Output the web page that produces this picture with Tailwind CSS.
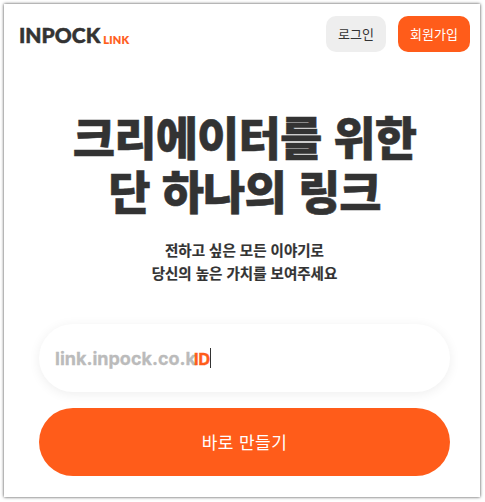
<!DOCTYPE html>
<html lang="ko">
<head>
    <meta charset="UTF-8">
    <meta name="viewport" content="width=device-width, initial-scale=1.0">
    <title>INPOCK LINK</title>
    <script src="https://cdn.jsdelivr.net/npm/@tailwindcss/browser@4"></script>
</head>
<body class="bg-white h-screen overflow-hidden font-['Noto_Sans_CJK_KR','Noto_Sans',sans-serif] text-[#333]">
    <div class="ml-1 mt-1 w-[476px] h-[493px] bg-white shadow-[0_0_3px_rgba(0,0,0,0.75)]">
        <header class="flex justify-between items-center pl-[15px] pr-[10px] pt-3">
            <a class="flex items-end gap-[3px] leading-none pt-[1px]">
                <span class="font-['Lato',sans-serif] font-black text-[21px] [-webkit-text-stroke:0.5px_#333] text-[#333]">INPOCK</span>
                <span class="font-['Lato',sans-serif] font-black text-[11px] [-webkit-text-stroke:0.2px_#ff5c1a] text-[#ff5c1a] tracking-[0.2px]">LINK</span>
            </a>
            <div class="flex gap-3">
                <button class="w-[60px] h-9 rounded-[10px] bg-[#eeeeee] text-[13px] text-[#333]">로그인</button>
                <button class="w-[72px] h-9 rounded-[10px] bg-[#ff5c1a] text-[13px] text-white">회원가입</button>
            </div>
        </header>

        <section class="flex flex-col items-center ml-[35px] mr-[30px] mt-[56px]">
            <h1 class="text-[46px] leading-[54px] font-black text-center tracking-[-0.9px] [-webkit-text-stroke:0.5px_#333] whitespace-nowrap">크리에이터를 위한<br>단 하나의 링크</h1>
            <p class="mt-[22px] text-[14.5px] leading-[23px] font-bold text-center [-webkit-text-stroke:0.2px_#333]">전하고 싶은 모든 이야기로<br>당신의 높은 가치를 보여주세요</p>
        </section>

        <form class="flex flex-col gap-4 ml-[35px] mr-[30px] mt-[40px]">
            <div class="flex items-center h-[68px] pl-4 rounded-full bg-white shadow-[0_2px_12px_rgba(0,0,0,0.07)]">
                <span class="font-['Inter',sans-serif] font-bold text-[18px] [-webkit-text-stroke:0.3px_#bbbbbb] text-[#bbbbbb] whitespace-nowrap">link.inpock.co.k</span>
                <span class="-ml-[2px] mt-[1px] font-['Inter',sans-serif] font-bold text-[16px] [-webkit-text-stroke:0.5px_#ff5c1a] text-[#ff5c1a]">ID</span>
                <span class="w-px h-5 bg-[#333]"></span>
            </div>
            <button type="button" class="h-[68px] rounded-full bg-[#ff5c1a] text-white text-[17px] tracking-[0.4px]">바로 만들기</button>
        </form>
    </div>
</body>
</html>
